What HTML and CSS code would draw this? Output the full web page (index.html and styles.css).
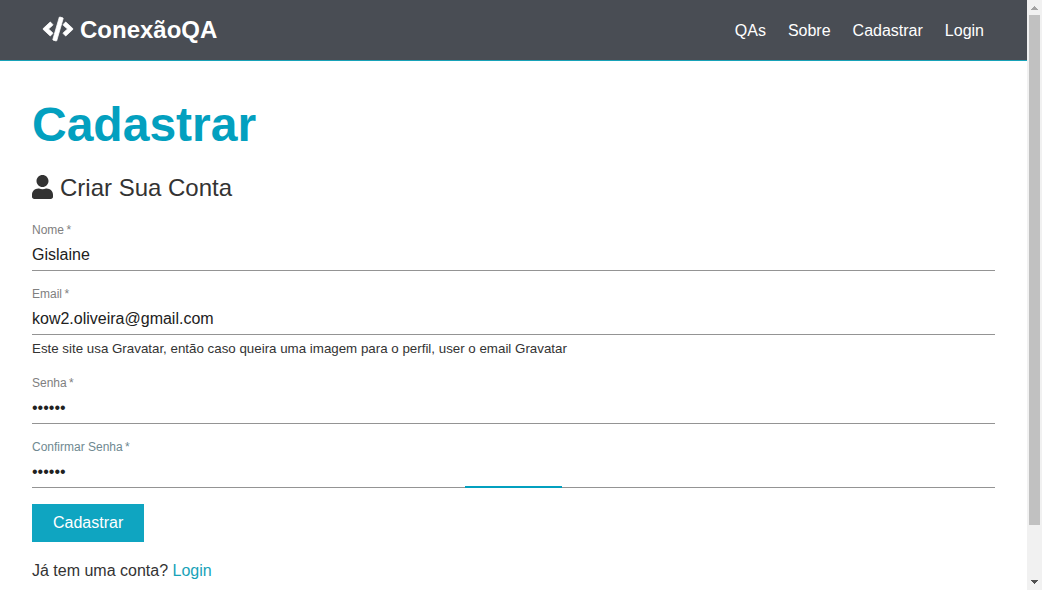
FILE: index.html
```html
<!DOCTYPE html>
<html lang="pt-BR">
<head>
  <meta charset="utf-8">
  <meta name="viewport" content="width=device-width, initial-scale=1">
  <title>ConexãoQA</title>
  <link rel="stylesheet" href="styles.css">
</head>
<body>
  <div class="viewport">
    <div class="page">
      <header class="navbar">
        <a class="brand" href="#">
          <svg class="brand-icon" viewBox="0 0 640 512" aria-hidden="true"><path fill="currentColor" stroke="currentColor" stroke-width="16" d="M278.9 511.5l-61-17.7c-6.4-1.8-10-8.5-8.2-14.9L346.2 8.7c1.8-6.4 8.5-10 14.9-8.2l61 17.7c6.4 1.8 10 8.5 8.2 14.9L293.8 503.3c-1.9 6.4-8.5 10.1-14.9 8.2zm-114-112.2l43.5-46.4c4.6-4.9 4.3-12.7-.8-17.2L117 256l90.6-79.7c5.1-4.5 5.5-12.3.8-17.2l-43.5-46.4c-4.5-4.8-12.1-5.1-17-.5L3.8 247.2c-5.1 4.7-5.1 12.8 0 17.5l144.1 135.1c4.9 4.6 12.5 4.4 17-.5zm327.2.6l144.1-135.1c5.1-4.7 5.1-12.8 0-17.5L492.1 112.1c-4.8-4.5-12.4-4.3-17 .5L431.6 159c-4.6 4.9-4.3 12.7.8 17.2L523 256l-90.6 79.7c-5.1 4.5-5.5 12.3-.8 17.2l43.5 46.4c4.5 4.9 12.1 5.1 17 .6z"/></svg>
          <span>ConexãoQA</span>
        </a>
        <nav class="nav-links">
          <a href="#">QAs</a>
          <a href="#">Sobre</a>
          <a href="#">Cadastrar</a>
          <a href="#">Login</a>
        </nav>
      </header>
      <main class="content">
        <h1 class="title">Cadastrar</h1>
        <p class="lead">
          <svg class="lead-icon" viewBox="0 0 448 512" aria-hidden="true"><path fill="currentColor" d="M224 256c70.7 0 128-57.3 128-128S294.7 0 224 0 96 57.3 96 128s57.3 128 128 128zm89.6 32h-16.7c-22.2 10.2-46.9 16-72.9 16s-50.6-5.8-72.9-16h-16.7C60.2 288 0 348.2 0 422.4V464c0 26.5 21.5 48 48 48h352c26.5 0 48-21.5 48-48v-41.6c0-74.2-60.2-134.4-134.4-134.4z"/></svg>
          <span>Criar Sua Conta</span>
        </p>
        <form class="form">
          <div class="field">
            <label for="name">Nome&#8201;*</label>
            <input id="name" type="text" value="Gislaine">
          </div>
          <div class="field">
            <label for="email">Email&#8201;*</label>
            <input id="email" type="email" value="kow2.oliveira@gmail.com">
            <small class="hint">Este site usa Gravatar, então caso queira uma imagem para o perfil, user o email Gravatar</small>
          </div>
          <div class="field">
            <label for="password">Senha&#8201;*</label>
            <input id="password" type="password" value="123456">
          </div>
          <div class="field field-active">
            <label for="confirm">Confirmar Senha&#8201;*</label>
            <input id="confirm" type="password" value="123456">
          </div>
          <button class="submit" type="submit">Cadastrar</button>
        </form>
        <p class="login">Já tem uma conta? <a href="#">Login</a></p>
      </main>
    </div>
    <div class="scrollbar" aria-hidden="true">
      <svg class="arrow arrow-up" viewBox="0 0 15 15" shape-rendering="crispEdges"><path fill="currentColor" d="M7 6h1v1h1v1h1v1h1v1H4V9h1V8h1V7h1z"/></svg>
      <div class="track"><div class="thumb"></div></div>
      <svg class="arrow" viewBox="0 0 15 15" shape-rendering="crispEdges"><path fill="currentColor" d="M4 5h7v1h-1v1H9v1H8v1H7V8H6V7H5V6H4z"/></svg>
    </div>
  </div>
</body>
</html>
```
FILE: styles.css
```css
* {
  box-sizing: border-box;
  margin: 0;
  padding: 0;
}

body {
  font-family: "Liberation Sans", Arial, sans-serif;
  font-size: 16px;
  color: #333;
  background: #fff;
}

a {
  text-decoration: none;
}

.viewport {
  display: flex;
  height: 100vh;
  overflow: hidden;
}

.page {
  flex: 1;
  min-width: 0;
  overflow: hidden;
}

.navbar {
  display: flex;
  justify-content: space-between;
  align-items: center;
  padding: 16px 32px;
  background: #494d54;
  border-bottom: 1px solid #17a2b8;
}

.brand {
  display: flex;
  align-items: center;
  gap: 7px;
  padding-left: 11px;
  font-size: 24px;
  line-height: 28px;
  font-weight: bold;
  color: #fff;
}

.brand-icon {
  width: 30px;
  height: 24px;
  margin-bottom: 2px;
  overflow: visible;
}

.nav-links {
  display: flex;
  gap: 22px;
  padding: 2px 11px 0 0;
}

.nav-links a {
  color: #fff;
}

.content {
  padding: 32px;
}

.title {
  font-size: 48px;
  line-height: 56px;
  padding: 4px 0;
  margin-bottom: 16px;
  color: #03a0bf;
}

.lead {
  display: flex;
  align-items: flex-start;
  gap: 7px;
  font-size: 24px;
  line-height: 30px;
  margin-bottom: 20px;
}

.lead-icon {
  width: 21px;
  height: 24px;
  margin-top: 2px;
}

.form {
  display: flex;
  flex-direction: column;
  gap: 16px;
}

.field {
  position: relative;
  display: flex;
  flex-direction: column;
}

.field label {
  font-size: 12px;
  line-height: 14px;
  color: #808080;
}

.field input {
  width: 100%;
  height: 34px;
  padding: 8px 0 6px;
  border: 0;
  border-bottom: 1px solid #949494;
  border-radius: 0;
  outline: 0;
  background: transparent;
  font: inherit;
  color: #212121;
}

.field-active label {
  color: #6f8991;
}

.field-active::after {
  content: "";
  position: absolute;
  bottom: 0;
  left: 45%;
  width: 10%;
  height: 2px;
  background: #03a0bf;
}

.hint {
  line-height: 16px;
  padding: 6px 0 3px;
}

.submit {
  align-self: flex-start;
  padding: 10px 21px;
  border: 0;
  background: #0fa5c1;
  color: #fff;
  font: inherit;
  line-height: 18px;
}

.login {
  margin-top: 20px;
  line-height: 18px;
}

.login a {
  color: #17a2b8;
}

.scrollbar {
  display: flex;
  flex-direction: column;
  width: 15px;
  background: #f1f1f1;
}

.arrow {
  width: 15px;
  height: 15px;
  color: #505050;
}

.arrow-up {
  color: #a3a3a3;
}

.track {
  flex: 1;
  padding: 0 2px;
}

.thumb {
  height: 91%;
  background: #c1c1c1;
}
```
